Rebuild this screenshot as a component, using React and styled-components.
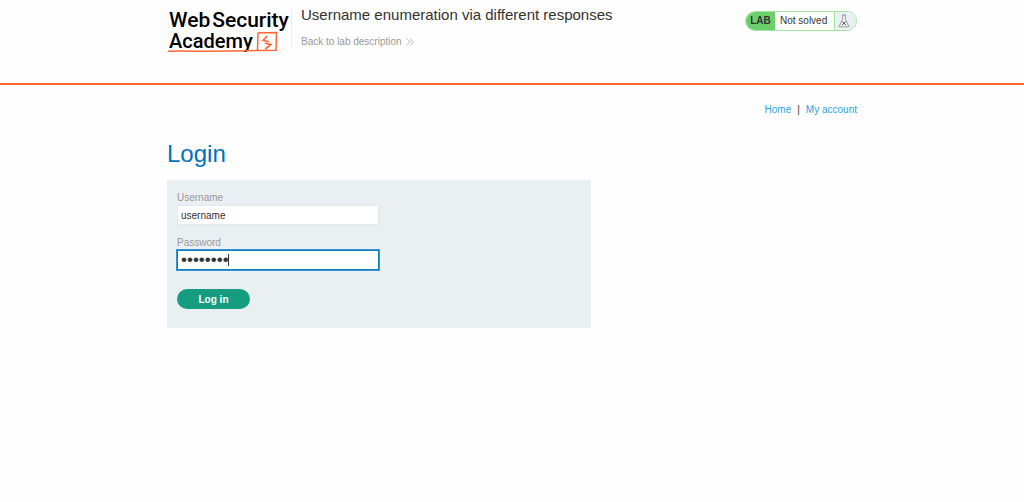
import React, { useState } from 'react';
import styled, { createGlobalStyle } from 'styled-components';

const GlobalStyle = createGlobalStyle`
  * {
    box-sizing: border-box;
  }

  body {
    margin: 0;
    background-color: #fefefe;
    color: #333332;
    font-family: "Liberation Sans", Arial, sans-serif;
    font-size: 10px;
    line-height: 12px;
  }
`

const Container = styled.div`
  width: 100%;
  max-width: 690px;
  margin: 0 auto;
`

const Header = styled.header`
  height: 85px;
  border-bottom: 2px solid #ff6633;
`

const HeaderRow = styled(Container)`
  display: flex;
  align-items: flex-start;
`

const LogoLink = styled.a`
  position: relative;
  width: 125px;
  height: 38px;
  margin-top: 10px;
  padding-left: 2px;
  border-right: 1px solid #ececec;
  color: #000000;
  font-family: Roboto, sans-serif;
  font-weight: 500;
  line-height: 21px;
  text-decoration: none;
`

const LogoLine = styled.span`
  display: flex;
  gap: 2px;
  font-size: ${props => props.$size};
`

const LogoMark = styled.svg`
  position: absolute;
  left: 0;
  top: 20px;
  width: 112px;
  height: 24px;
`

const TitleBlock = styled.div`
  display: flex;
  flex: 1;
  flex-direction: column;
  align-items: flex-start;
  gap: 12px;
  margin: 6px 0 0 9px;
`

const Title = styled.h2`
  margin: 0;
  font-size: 15px;
  font-weight: 400;
  line-height: 18px;
`

const BackLink = styled.a`
  display: flex;
  align-items: center;
  gap: 4px;
  color: #9a9a9a;
  text-decoration: none;
`

const Status = styled.div`
  display: flex;
  width: 112px;
  height: 20px;
  margin-top: 11px;
  border: 1px solid #a5e3a5;
  border-radius: 10px;
  line-height: 18px;
  overflow: hidden;
`

const StatusTag = styled.span`
  width: 29px;
  background-color: #6bd06b;
  font-weight: 700;
  text-align: center;
`

const StatusText = styled.p`
  flex: 1;
  margin: 0;
  padding-left: 5px;
  background-color: #ffffff;
`

const StatusIcon = styled.span`
  display: flex;
  align-items: center;
  width: 22px;
  padding-left: 3px;
  border-left: 1px solid #a5e3a5;
  background-color: #eaeff2;
`

const TopLinks = styled.nav`
  display: flex;
  justify-content: flex-end;
  gap: 6px;
  padding-top: 19px;
`

const TopLink = styled.a`
  color: #29a7df;
  text-decoration: none;
`

const Heading = styled.h1`
  margin: 24px 0 12px;
  color: #0071bc;
  font-size: 24px;
  font-weight: 400;
  line-height: 28px;
`

const LoginForm = styled.form`
  max-width: 424px;
  padding: 12px 10px 19px;
  background-color: #eaeff2;
`

const Label = styled.label`
  display: block;
  margin-bottom: 1px;
  color: #999999;
`

const Field = styled.div`
  position: relative;
  width: 202px;
  max-width: 100%;
  margin-bottom: 12px;
`

const Input = styled.input`
  display: block;
  width: 100%;
  height: 20px;
  padding: 0 3px;
  border: 1px solid #e4e8ea;
  border-radius: 0;
  background-color: #ffffff;
  color: #333332;
  font-family: inherit;
  font-size: ${props => props.type === 'password' ? '17px' : '10px'};
  caret-color: transparent;

  &:focus {
    border-color: #0f7dc2;
    outline: 1px solid #3b93cc;
  }
`

const Caret = styled.span`
  position: absolute;
  left: 51px;
  bottom: 4px;
  width: 1px;
  height: 12px;
  background-color: #333332;
`

const Button = styled.button`
  width: 73px;
  height: 20px;
  margin-top: 7px;
  padding: 0;
  border: 0;
  border-radius: 10px;
  background-color: #169c80;
  color: #ffffff;
  font-family: inherit;
  font-size: 10px;
  font-weight: 700;
`

function Logo() {
    return (
        <LogoLink href="#" aria-label="Web Security Academy">
            <LogoLine $size="21px"><span>Web</span><span>Security</span></LogoLine>
            <LogoLine $size="20px">Academy</LogoLine>
            <LogoMark viewBox="0 0 112 24" fill="none">
                <path d="M1 21.2C20 20.8 50 21.8 90 20.5L109 20.2L109.5 2.5L91 3L90.5 20.5" stroke="#ff6633" strokeWidth="1.5"/>
                <path d="M100 6L96.2 10.2L101.8 11.8M97.8 13L103.8 14.6L98.2 19" stroke="#ff6633" strokeWidth="1.7"/>
            </LogoMark>
        </LogoLink>
    );
}

function LabStatus() {
    return (
        <Status>
            <StatusTag>LAB</StatusTag>
            <StatusText>Not solved</StatusText>
            <StatusIcon>
                <svg width="12" height="14" viewBox="0 0 12 14" fill="none" stroke="#808588" strokeWidth="0.8">
                    <path d="M4 1H8M4.7 1V5.2L1 12.8H11L7.3 5.2V1" fill="#f8fafa"/>
                    <path d="M4.3 7.5L8 11.2M7.7 7.5L4 11.2" stroke="#444749" strokeWidth="1"/>
                </svg>
            </StatusIcon>
        </Status>
    );
}

function App() {
    const [username, setUsername] = useState('username');
    const [password, setPassword] = useState('password');

    return (
        <>
            <GlobalStyle/>
            <Header>
                <HeaderRow>
                    <Logo/>
                    <TitleBlock>
                        <Title>Username enumeration via different responses</Title>
                        <BackLink href="#">
                            Back to lab description
                            <svg width="8" height="8" viewBox="0 0 8 8" fill="none" stroke="#a5a5a5" strokeWidth="0.7">
                                <path d="M0.5 0.5L4 4L0.5 7.5M4 0.5L7.5 4L4 7.5"/>
                            </svg>
                        </BackLink>
                    </TitleBlock>
                    <LabStatus/>
                </HeaderRow>
            </Header>
            <Container as="main">
                <TopLinks>
                    <TopLink href="#">Home</TopLink>
                    <span>|</span>
                    <TopLink href="#">My account</TopLink>
                </TopLinks>
                <Heading>Login</Heading>
                <LoginForm onSubmit={e => e.preventDefault()}>
                    <Label htmlFor="username">Username</Label>
                    <Field>
                        <Input id="username" type="text" value={username} onChange={e => setUsername(e.target.value)}/>
                    </Field>
                    <Label htmlFor="password">Password</Label>
                    <Field>
                        <Input id="password" type="password" autoFocus value={password} onChange={e => setPassword(e.target.value)}/>
                        <Caret/>
                    </Field>
                    <Button type="submit">Log in</Button>
                </LoginForm>
            </Container>
        </>
    );
}

export default App;
